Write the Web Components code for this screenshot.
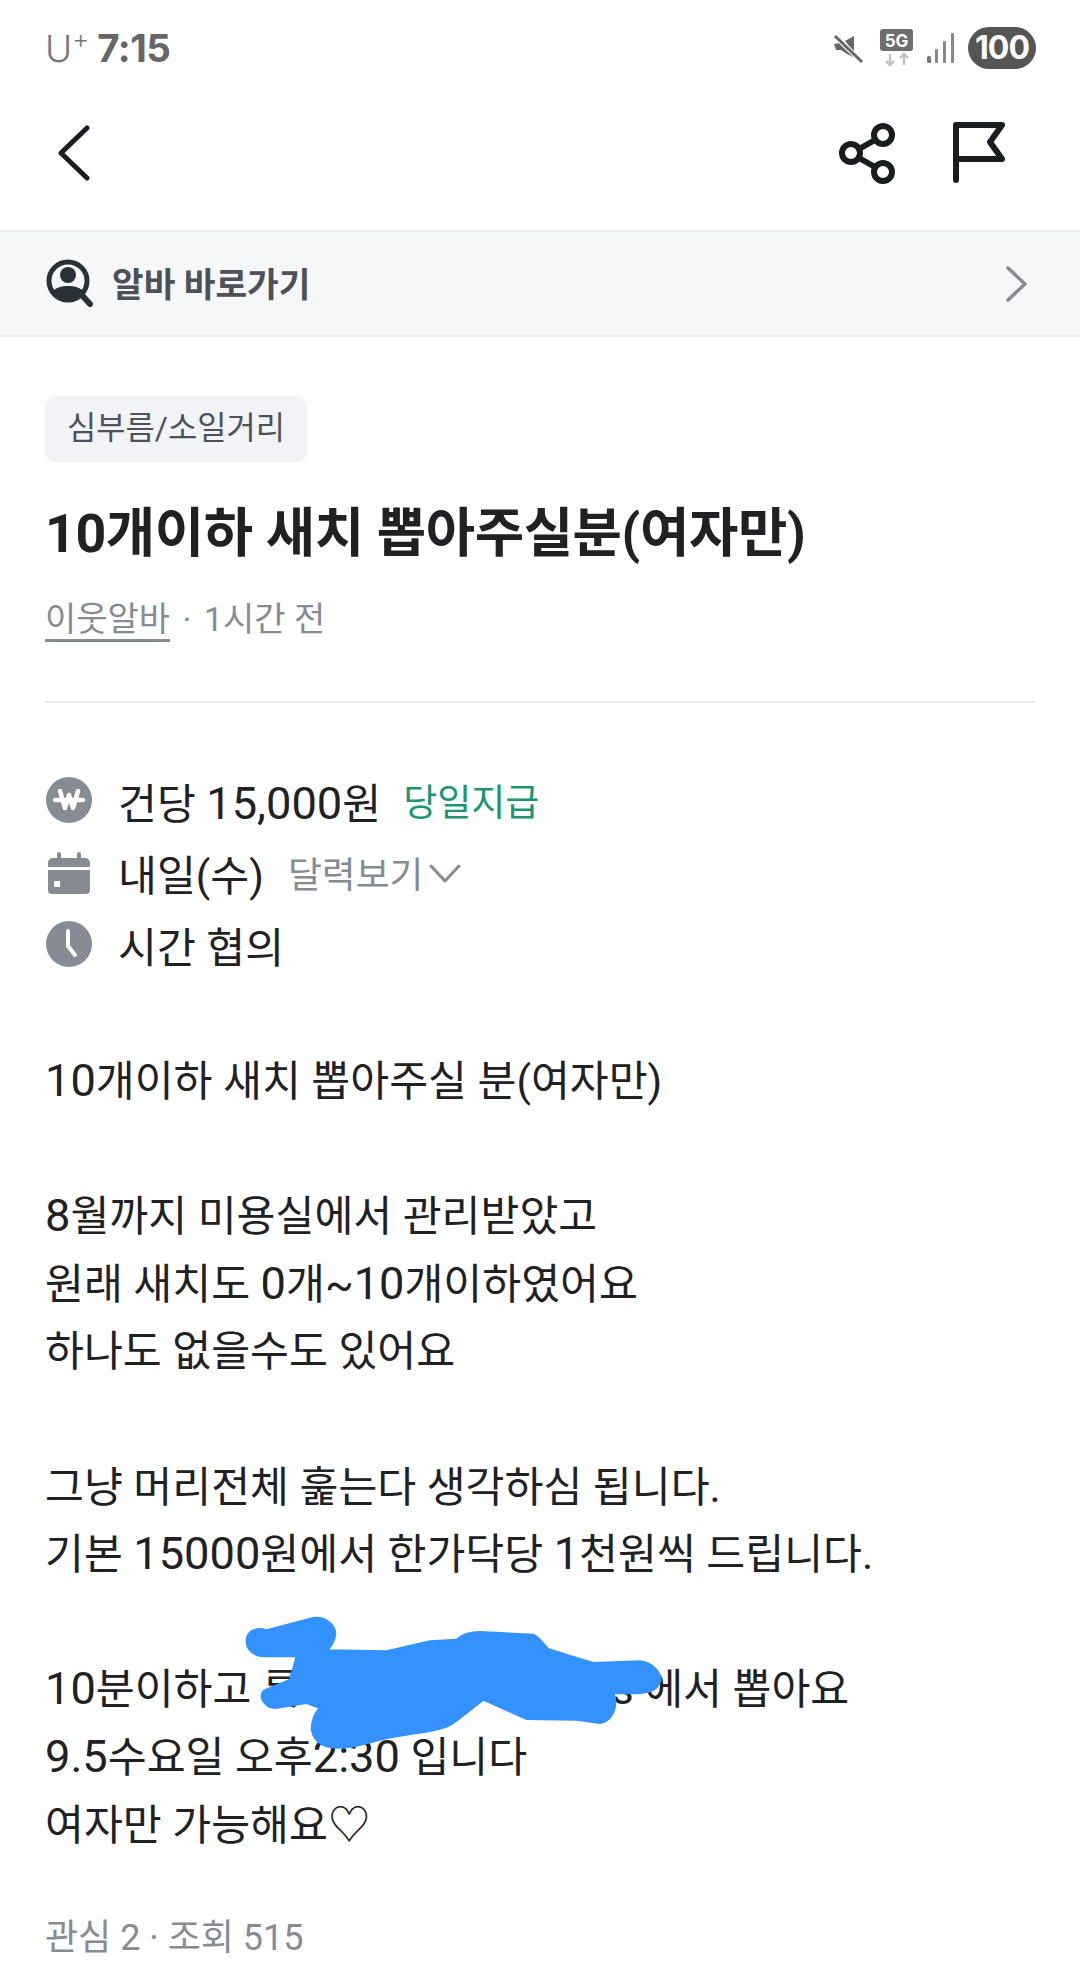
<!DOCTYPE html>
<html lang="ko">
<head>
<meta charset="utf-8">
<title>알바</title>
<style>
    html, body {
        margin: 0;
        height: 1967px;
        overflow: hidden;
        background: #fff;
        font-family: Roboto, "Noto Sans CJK KR", sans-serif;
    }
</style>
</head>
<body>
<job-page>
    <status-bar></status-bar>
    <app-bar></app-bar>
    <alba-banner>알바 바로가기</alba-banner>
    <post-head category="심부름/소일거리" author="이웃알바" age="1시간 전">10개이하 새치 뽑아주실분(여자만)</post-head>
    <job-info></job-info>
    <post-body></post-body>
    <post-foot>관심 2 · 조회 515</post-foot>
</job-page>

<script>
class JobPage extends HTMLElement {
    constructor() {
        super();
        this.attachShadow({ mode: "open" });
        this.shadowRoot.innerHTML = `
        <style>
            :host { display: block; width: 1080px; height: 1967px; overflow: hidden; }
        </style>
        <slot></slot>`;
    }
}

class StatusBar extends HTMLElement {
    constructor() {
        super();
        this.attachShadow({ mode: "open" });
        this.shadowRoot.innerHTML = `
        <style>
            :host { display: flex; align-items: center; justify-content: space-between; height: 96px; padding: 0 44px 0 45px; box-sizing: border-box; color: #666; }
            .left { display: flex; align-items: baseline; font-family: Inter, sans-serif; }
            .carrier { font-size: 37px; font-weight: 300; color: #777; }
            .carrier sup { font-size: 26px; line-height: 0; vertical-align: 14px; }
            .time { font-size: 38.5px; font-weight: 700; margin-left: 8px; letter-spacing: -0.5px; }
            .right { display: flex; align-items: center; }
            svg { display: block; }
            .mute { margin-right: 15px; }
            .net { margin-right: 13px; }
            .signal { margin-right: 13px; }
            .battery { width: 68px; height: 42px; border-radius: 21px; background: #555; color: #fff; font: 700 32px/42px Inter, sans-serif; text-align: center; letter-spacing: -1px; }
        </style>
        <div class="left"><span class="carrier">U<sup>+</sup></span><span class="time">7:15</span></div>
        <div class="right">
            <svg class="mute" width="32" height="32" viewBox="0 0 32 32">
                <path d="M1 12l6 -1 13 13v1l-6-3-6-4H3z" fill="#666"/>
                <path d="M12 9l9-5v16z" fill="#666"/>
                <path d="M3 5 30 31" stroke="#fff" stroke-width="5"/>
                <path d="M2 4 29 30" stroke="#666" stroke-width="3"/>
            </svg>
            <svg class="net" width="34" height="38" viewBox="0 0 34 38">
                <rect width="33" height="22" rx="3" fill="#6e6e6e"/>
                <text x="16.5" y="18" text-anchor="middle" font-family="Inter, sans-serif" font-weight="700" font-size="17" fill="#fff">5G</text>
                <path d="M10 25v11M6 32l4 4 4-4M24 36V25M20 29l4-4 4 4" fill="none" stroke="#c4c4c4" stroke-width="2.5"/>
            </svg>
            <svg class="signal" width="28" height="30" viewBox="0 0 28 30">
                <rect x="0" y="23" width="4" height="7" rx="1.5" fill="#777"/>
                <rect x="8" y="16" width="3" height="14" rx="1" fill="#888"/>
                <rect x="16" y="8" width="3" height="22" rx="1" fill="#888"/>
                <rect x="24" y="0" width="3" height="30" rx="1" fill="#888"/>
            </svg>
            <div class="battery">100</div>
        </div>`;
    }
}

class AppBar extends HTMLElement {
    constructor() {
        super();
        this.attachShadow({ mode: "open" });
        this.shadowRoot.innerHTML = `
        <style>
            :host { display: flex; align-items: center; justify-content: space-between; height: 136px; padding: 0 75px 20px 58px; box-sizing: border-box; border-bottom: 2px solid #eaebee; }
            .actions { display: flex; align-items: center; gap: 57px; }
            svg { display: block; fill: none; stroke: #1a1c20; stroke-linecap: round; stroke-linejoin: round; }
        </style>
        <svg width="32" height="56" viewBox="0 0 32 56" stroke-width="5">
            <path d="M29 3 3 28 29 53"/>
        </svg>
        <div class="actions">
            <svg width="58" height="62" viewBox="0 0 58 62" stroke-width="6">
                <circle cx="45" cy="13" r="9"/>
                <circle cx="13" cy="31" r="9"/>
                <circle cx="45" cy="50" r="9"/>
                <path d="M21 27 37 18M21 36 37 45"/>
            </svg>
            <svg width="52" height="62" viewBox="0 0 52 62" stroke-width="6">
                <path d="M3 58V3H49L37 20 49 37H3"/>
            </svg>
        </div>`;
    }
}

class AlbaBanner extends HTMLElement {
    constructor() {
        super();
        this.attachShadow({ mode: "open" });
        this.shadowRoot.innerHTML = `
        <style>
            :host { display: flex; align-items: center; height: 105px; padding: 0 52px 0 46px; box-sizing: border-box; background: #f6f7f9; border-bottom: 2px solid #eaebee; }
            svg { display: block; flex: none; }
            .label { flex: 1; margin: -3px 0 0 18px; font-size: 34.4px; font-weight: 700; color: #4d5159; }
        </style>
        <svg width="48" height="50" viewBox="0 0 48 50">
            <circle cx="22" cy="22" r="19" fill="none" stroke="#2a3038" stroke-width="5"/>
            <circle cx="22" cy="16" r="8" fill="#2a3038"/>
            <path d="M6 33c4-5 10-6 16-6s12 1 16 6c-4 5-10 8-16 8s-12-3-16-8z" fill="#2a3038"/>
            <path d="M33 33 44 45" stroke="#2a3038" stroke-width="6" stroke-linecap="round"/>
        </svg>
        <span class="label"><slot></slot></span>
        <svg width="22" height="36" viewBox="0 0 22 36" fill="none" stroke="#868b94" stroke-width="3.5" stroke-linecap="round" stroke-linejoin="round">
            <path d="M2 2 19 18 2 34"/>
        </svg>`;
    }
}

class PostHead extends HTMLElement {
    constructor() {
        super();
        this.attachShadow({ mode: "open" });
        this.shadowRoot.innerHTML = `
        <style>
            :host { display: block; margin: 0 45px; padding-top: 59px; height: 366px; box-sizing: border-box; border-bottom: 2px solid #eaebee; }
            .tag { display: inline-block; height: 66px; line-height: 64px; padding: 0 22px; border-radius: 10px; background: #f2f3f6; color: #4d5159; font-size: 31.8px; }
            h1 { margin: 39px 0 0; font-size: 53.7px; line-height: 66px; font-weight: 700; color: #212124; letter-spacing: -0.4px; }
            .meta { margin-top: 28px; font-size: 34px; line-height: 48px; color: #868b94; }
            .author { display: inline-block; line-height: 39px; border-bottom: 3px solid #868b94; }
            .dot { margin: 0 4px; }
        </style>
        <span class="tag" id="tag"></span>
        <h1><slot></slot></h1>
        <div class="meta"><span class="author" id="author"></span> <span class="dot">·</span> <span id="age"></span></div>`;
        this.shadowRoot.getElementById("tag").textContent = this.getAttribute("category");
        this.shadowRoot.getElementById("author").textContent = this.getAttribute("author");
        this.shadowRoot.getElementById("age").textContent = this.getAttribute("age");
    }
}

class JobInfo extends HTMLElement {
    constructor() {
        super();
        this.attachShadow({ mode: "open" });
        this.shadowRoot.innerHTML = `
        <style>
            :host { display: flex; flex-direction: column; margin: 61px 45px 0; font-size: 42.3px; color: #212124; }
            .row { display: flex; align-items: center; height: 72px; }
            svg { display: block; flex: none; margin-right: 25px; }
            .n { font-size: 45.2px; line-height: 0; }
            .pay { margin-left: 22px; font-size: 37px; color: #1a9772; }
            .more { margin-left: 24px; font-size: 36.8px; color: #868b94; }
            .chev { margin: 4px 0 0 6px; }
        </style>
        <div class="row">
            <svg width="48" height="48" viewBox="0 0 48 48">
                <circle cx="24" cy="24" r="23" fill="#868b94"/>
                <path d="M10 24h28M15 15l5 17 4-13 4 13 5-17" fill="none" stroke="#fff" stroke-width="4.5" stroke-linejoin="round" stroke-linecap="round"/>
            </svg>
            <span>건당 <span class="n">15,000</span>원</span><span class="pay">당일지급</span>
        </div>
        <div class="row">
            <svg width="48" height="48" viewBox="0 0 48 48">
                <path d="M3 15a5 5 0 0 1 5-5h4V6a2 2 0 0 1 4 0v4h16V6a2 2 0 0 1 4 0v4h4a5 5 0 0 1 5 5v4H3z" fill="#868b94"/>
                <path d="M3 22h42v20a4 4 0 0 1-4 4H7a4 4 0 0 1-4-4z" fill="#868b94"/>
                <rect x="9" y="33" width="6" height="6" fill="#fff"/>
            </svg>
            <span>내일(수)</span><span class="more">달력보기</span>
            <svg class="chev" width="32" height="20" viewBox="0 0 32 20" fill="none" stroke="#868b94" stroke-width="3" stroke-linecap="round" stroke-linejoin="round">
                <path d="M2 2 16 17 30 2"/>
            </svg>
        </div>
        <div class="row">
            <svg width="48" height="48" viewBox="0 0 48 48">
                <circle cx="24" cy="24" r="23" fill="#868b94"/>
                <path d="M23 11v15l7 9" fill="none" stroke="#fff" stroke-width="4" stroke-linecap="round" stroke-linejoin="round"/>
            </svg>
            <span>시간 협의</span>
        </div>`;
    }
}

class PostBody extends HTMLElement {
    constructor() {
        super();
        this.attachShadow({ mode: "open" });
        this.shadowRoot.innerHTML = `
        <style>
            :host { display: block; position: relative; margin: 68px 45px 0; font-size: 42.3px; line-height: 67.6px; color: #212124; }
            p { margin: 0 0 67.6px; }
            p:last-of-type { margin-bottom: 0; }
            .n { font-size: 45.2px; line-height: 0; }
            .gap { display: inline-block; width: 311px; }
            .scribble { position: absolute; left: 155px; top: 545px; }
        </style>
        <p><span class="n">10</span>개이하 새치 뽑아주실 분(여자만)</p>
        <p><span class="n">8</span>월까지 미용실에서 관리받았고<br>원래 새치도 <span class="n">0</span>개~<span class="n">10</span>개이하였어요<br>하나도 없을수도 있어요</p>
        <p>그냥 머리전체 훑는다 생각하심 됩니다.<br>기본 <span class="n">15000</span>원에서 한가닥당 <span class="n">1</span>천원씩 드립니다.</p>
        <p><span class="n">10</span>분이하고 롯<span class="gap"></span>s 에서 뽑아요<br><span class="n">9.5</span>수요일 오후<span class="n">2:30</span> 입니다<br>여자만 가능해요♡</p>
        <svg class="scribble" width="500" height="170" viewBox="0 0 1500 510">
            <path fill="#3492fe" stroke="#3492fe" stroke-width="6" stroke-linejoin="round" d="M140 145 C140 120 160 100 200 112 L340 75 C380 70 410 100 405 130 C400 150 390 165 380 172 L560 175 L690 145 L770 140 C790 120 820 115 860 118 L1000 125 C1020 135 1030 155 1045 168 L1120 192 L1180 210 L1320 205 C1360 210 1385 240 1380 265 C1370 295 1350 305 1240 300 C1255 335 1240 385 1200 390 L1130 380 L980 378 L850 320 L780 375 C750 400 730 410 650 420 L560 435 L470 458 C400 472 345 465 335 410 C335 380 345 360 360 345 L320 330 L225 345 C195 340 175 315 190 295 C205 285 240 275 270 260 L290 190 L200 190 C160 190 140 170 140 145 Z"/>
        </svg>`;
    }
}

class PostFoot extends HTMLElement {
    constructor() {
        super();
        this.attachShadow({ mode: "open" });
        this.shadowRoot.innerHTML = `
        <style>
            :host { display: block; margin: 55px 45px 0; font-size: 36px; line-height: 48px; color: #868b94; }
        </style>
        <slot></slot>`;
    }
}

customElements.define("job-page", JobPage);
customElements.define("status-bar", StatusBar);
customElements.define("app-bar", AppBar);
customElements.define("alba-banner", AlbaBanner);
customElements.define("post-head", PostHead);
customElements.define("job-info", JobInfo);
customElements.define("post-body", PostBody);
customElements.define("post-foot", PostFoot);
</script>
</body>
</html>
